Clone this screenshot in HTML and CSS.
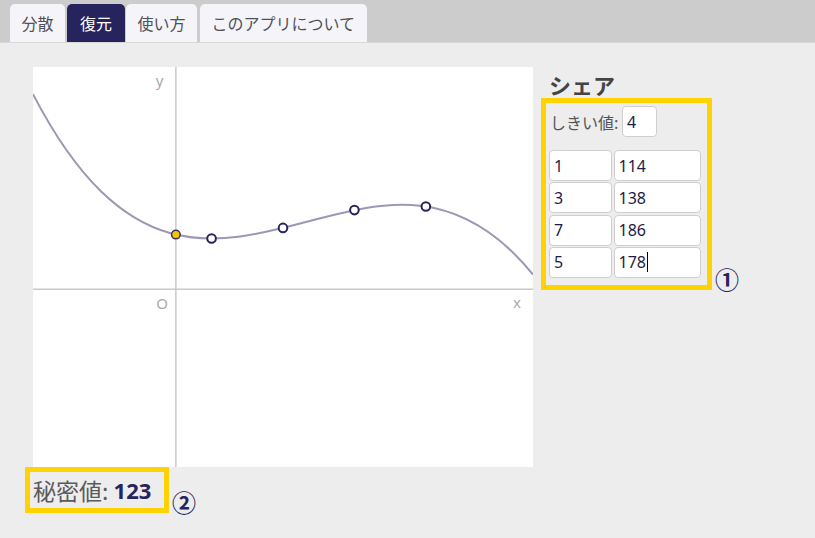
FILE: index.html
```html
<!DOCTYPE html>
<html lang="ja">
<head>
<meta charset="utf-8">
<title>秘密分散 - 復元</title>
<link rel="stylesheet" href="styles.css">
</head>
<body>
<nav class="tabs">
  <a class="tab">分散</a>
  <a class="tab active">復元</a>
  <a class="tab">使い方</a>
  <a class="tab">このアプリについて</a>
</nav>
<main class="app">
  <section class="chart-col">
    <svg class="chart" width="500" height="400" viewBox="0 0 500 400">
      <rect x="0" y="0" width="500" height="400" fill="#fff"/>
      <line class="axis" x1="142.86" y1="0" x2="142.86" y2="400"/>
      <line class="axis" x1="0" y1="222.22" x2="500" y2="222.22"/>
      <text class="lbl" x="126.5" y="19" text-anchor="middle">y</text>
      <text class="lbl" x="129" y="242" text-anchor="middle">O</text>
      <text class="lbl" x="484" y="241" text-anchor="middle">x</text>
      <path class="curve" d="M0 27.11 C166.67 348.59 333.33 2.22 500 207.56"/>
      <circle class="pt secret" cx="142.86" cy="167.56" r="4.3"/>
      <circle class="pt" cx="178.57" cy="171.56" r="4.3"/>
      <circle class="pt" cx="250" cy="160.89" r="4.3"/>
      <circle class="pt" cx="321.43" cy="143.11" r="4.3"/>
      <circle class="pt" cx="392.86" cy="139.56" r="4.3"/>
    </svg>
    <div class="secret-row">
      <div class="secret-box hl"><span class="secret-label">秘密値: </span><span class="secret-value">123</span></div>
      <span class="marker">②</span>
    </div>
  </section>
  <section class="panel">
    <h2 class="panel-title">シェア</h2>
    <div class="share-row">
      <div class="share-box hl">
        <div class="threshold">
          <span class="threshold-label">しきい値:</span>
          <div class="field field-k">4</div>
        </div>
        <div class="share-grid">
          <div class="field">1</div><div class="field">114</div>
          <div class="field">3</div><div class="field">138</div>
          <div class="field">7</div><div class="field">186</div>
          <div class="field">5</div><div class="field">178<span class="caret"></span></div>
        </div>
      </div>
      <span class="marker">①</span>
    </div>
  </section>
</main>
</body>
</html>
```
FILE: styles.css
```css
* { box-sizing: border-box; }
html, body { margin: 0; padding: 0; }
body {
  background: #ededed;
  font-family: "Noto Sans CJK JP", "Noto Sans", sans-serif;
  color: #555;
  width: 815px;
  height: 538px;
  overflow: hidden;
}
.tabs {
  display: flex;
  align-items: flex-end;
  height: 43px;
  padding: 4px 0 0 10px;
  background: #cccccc;
  border-bottom: 1px solid #d9d9d9;
}
.tab {
  display: flex;
  align-items: center;
  height: 38px;
  padding: 0 11.5px;
  margin-right: 2px;
  background: #f5f5f9;
  color: #50505a;
  font-size: 16px;
  border-radius: 5px 5px 0 0;
  line-height: 1;
}
.tab.active {
  background: #27235d;
  color: #fff;
  padding: 0 13px;
  margin-right: 1px;
}
.tab:last-child { margin-left: 1px; }
.app {
  display: flex;
  align-items: flex-start;
  padding: 24px 0 0 25px;
}
.chart-col {
  display: flex;
  flex-direction: column;
  width: 508px;
}
.chart {
  display: block;
  margin-left: 8px;
}
.axis { stroke: #c9c9c9; stroke-width: 1.5; }
.lbl {
  fill: #aaa;
  font-family: "Noto Sans", sans-serif;
  font-size: 15px;
}
.curve { fill: none; stroke: #9a98b5; stroke-width: 2; }
.pt { fill: #fff; stroke: #27235d; stroke-width: 2; }
.pt.secret { fill: #f5c400; stroke: #3a3560; stroke-width: 1.5; }
.hl { border: 5px solid #ffd200; }
.secret-row {
  display: flex;
  align-items: flex-end;
}
.secret-box {
  display: flex;
  align-items: center;
  width: 144px;
  height: 46px;
  padding: 0 0 0 3px;
  white-space: pre;
}
.secret-label {
  font-size: 23px;
  color: #5a5a5a;
}
.secret-value {
  font-family: "Noto Sans", sans-serif;
  font-weight: 700;
  font-size: 22px;
  color: #27235d;
}
.marker {
  font-family: "Noto Sans CJK JP", sans-serif;
  font-weight: 700;
  font-size: 24px;
  line-height: 24px;
  color: #27235d;
  margin-left: 3px;
  margin-bottom: -1px;
}
.panel {
  display: flex;
  flex-direction: column;
  margin-left: 8px;
}
.panel-title {
  margin: 4px 0 0 8px;
  font-size: 22px;
  line-height: 27px;
  font-weight: 700;
  color: #444;
}
.share-row {
  display: flex;
  align-items: flex-end;
}
.share-box {
  width: 171px;
  height: 192px;
  padding: 3px 0 0 3px;
}
.threshold {
  display: flex;
  align-items: center;
  height: 31px;
}
.threshold-label {
  font-size: 16px;
  color: #555;
  margin-left: 1px;
  width: 72px;
}
.field {
  display: flex;
  align-items: center;
  height: 31px;
  padding-left: 4px;
  background: #fff;
  border: 1px solid #cfcfcf;
  border-radius: 4px;
  font-family: "Noto Sans", sans-serif;
  font-size: 16px;
  color: #1e1c48;
}
.field-k { width: 35px; }
.share-grid {
  display: grid;
  grid-template-columns: 63px 87px;
  grid-auto-rows: 31px;
  column-gap: 1.5px;
  row-gap: 1.3px;
  margin-top: 13px;
}
.caret {
  display: inline-block;
  width: 1px;
  height: 20px;
  background: #000;
  margin-left: 1px;
}
```
